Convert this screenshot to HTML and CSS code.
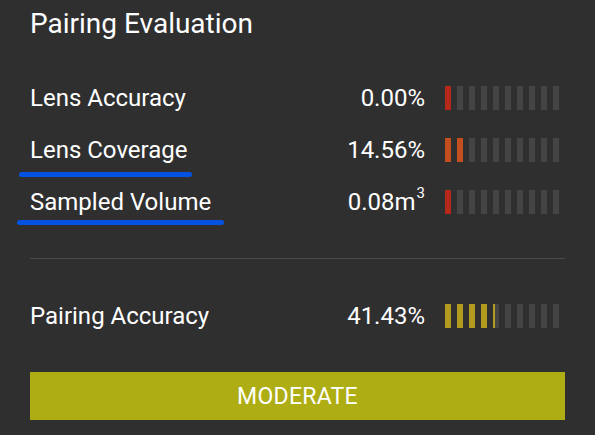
FILE: index.html
```html
<!DOCTYPE html>
<html>
<head>
<meta charset="utf-8">
<link rel="stylesheet" href="styles.css">
</head>
<body>
<div class="panel">
  <h1 class="title">Pairing Evaluation</h1>
  <div class="row">
    <span class="label">Lens Accuracy</span>
    <span class="value">0.00%</span>
    <div class="bar"><div class="fill red" style="width:6px"></div></div>
  </div>
  <div class="row">
    <span class="label mark mark-a">Lens Coverage</span>
    <span class="value">14.56%</span>
    <div class="bar"><div class="fill orange" style="width:17.5px"></div></div>
  </div>
  <div class="row">
    <span class="label mark mark-b">Sampled Volume</span>
    <span class="value">0.08m<sup>3</sup></span>
    <div class="bar"><div class="fill red" style="width:6px"></div></div>
  </div>
  <div class="divider"></div>
  <div class="row row-total">
    <span class="label">Pairing Accuracy</span>
    <span class="value">41.43%</span>
    <div class="bar"><div class="fill yellow" style="width:49.7px"></div></div>
  </div>
  <div class="status">MODERATE</div>
</div>
</body>
</html>
```
FILE: styles.css
```css
html, body {
  margin: 0;
  padding: 0;
  background: #2f2f2f;
}
body {
  width: 595px;
  height: 435px;
  overflow: hidden;
  font-family: Roboto, "Liberation Sans", sans-serif;
  color: #ffffff;
}
.panel {
  padding: 0 30px;
  display: flex;
  flex-direction: column;
}
.title {
  margin: 0;
  padding-top: 9px;
  height: 30px;
  line-height: 30px;
  font-size: 28px;
  font-weight: 400;
  margin-bottom: 33px;
}
.row {
  height: 52px;
  display: flex;
  align-items: center;
}
.label {
  flex: 1;
  font-size: 24px;
  font-weight: 400;
  line-height: 28px;
  position: relative;
}
.value {
  font-size: 24px;
  font-weight: 400;
  line-height: 28px;
  text-align: right;
  margin-right: 20px;
}
.value sup {
  font-size: 15px;
  line-height: 0;
  position: relative;
  top: -3px;
  margin-left: 1px;
}
.bar {
  width: 120px;
  height: 24px;
  background: repeating-linear-gradient(to right, #444444 0 6px, transparent 6px 12px);
}
.fill {
  height: 100%;
}
.fill.red {
  background: repeating-linear-gradient(to right, #b5291d 0 6px, transparent 6px 12px);
}
.fill.orange {
  background: repeating-linear-gradient(to right, #c24f1d 0 6px, transparent 6px 12px);
}
.fill.yellow {
  background: repeating-linear-gradient(to right, #b39b1d 0 6px, transparent 6px 12px);
}
.mark::after {
  content: "";
  position: absolute;
  height: 5px;
  border-radius: 3px;
  background: #0452e2;
}
.mark-a::after {
  left: -11px;
  width: 173px;
  top: 36px;
}
.mark-b::after {
  left: -13px;
  width: 207px;
  top: 32px;
}
.divider {
  margin-top: 30px;
  height: 1px;
  background: #4a4a4a;
}
.row-total {
  margin-top: 31px;
}
.status {
  margin-top: 30px;
  height: 48px;
  background: #aead14;
  display: flex;
  align-items: center;
  justify-content: center;
  font-size: 23px;
  font-weight: 400;
  letter-spacing: 0.3px;
}
```
